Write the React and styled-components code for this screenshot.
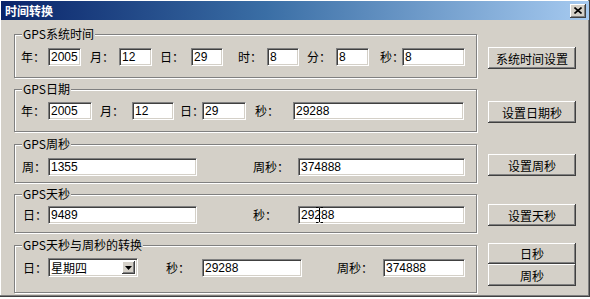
import React from 'react';
import styled, { createGlobalStyle } from 'styled-components';

const GlobalStyle = createGlobalStyle`
  html, body {
    margin: 0;
    padding: 0;
    background: #ffffff;
  }
  body {
    font-family: "Noto Sans CJK SC", "Liberation Sans", sans-serif;
    font-size: 12px;
  }
`;

// x where group content starts (border at 14, 1px thick)
const GROUP_X = 15;

const groups = [
  {
    title: 'GPS系统时间', h: 44, pt: 13, mt: 0,
    buttons: [{ text: '系统时间设置', mt: 13 }],
    fields: [
      { label: '年：', lx: 21, ix: 48, iw: 33, value: '2005' },
      { label: '月：', lx: 90, ix: 119, iw: 33, value: '12' },
      { label: '日：', lx: 160, ix: 191, iw: 32, value: '29' },
      { label: '时：', lx: 238, ix: 267, iw: 32, value: '8' },
      { label: '分：', lx: 307, ix: 336, iw: 33, value: '8' },
      { label: '秒：', lx: 380, ix: 402, iw: 63, value: '8' },
    ],
  },
  {
    title: 'GPS日期', h: 43, pt: 12, mt: 11,
    buttons: [{ text: '设置日期秒', mt: 12 }],
    fields: [
      { label: '年：', lx: 21, ix: 48, iw: 44, value: '2005' },
      { label: '月：', lx: 100, ix: 132, iw: 42, value: '12' },
      { label: '日：', lx: 180, ix: 202, iw: 44, value: '29' },
      { label: '秒：', lx: 255, ix: 293, iw: 171, value: '29288' },
    ],
  },
  {
    title: 'GPS周秒', h: 39, pt: 13, mt: 12,
    buttons: [{ text: '设置周秒', mt: 10 }],
    fields: [
      { label: '周：', lx: 22, ix: 48, iw: 149, value: '1355' },
      { label: '周秒：', lx: 253, ix: 298, iw: 167, value: '374888' },
    ],
  },
  {
    title: 'GPS天秒', h: 39, pt: 11, mt: 11,
    buttons: [{ text: '设置天秒', mt: 10 }],
    fields: [
      { label: '日：', lx: 23, ix: 48, iw: 149, value: '9489' },
      { label: '秒：', lx: 253, ix: 298, iw: 167, value: '29288', cursor: 17 },
    ],
  },
  {
    title: 'GPS天秒与周秒的转换', h: 48, pt: 13, mt: 12,
    buttons: [{ text: '日秒', mt: -2, h: 21 }, { text: '周秒', mt: 0 }],
    fields: [
      { label: '日：', lx: 23, ix: 48, iw: 90, value: '星期四', combo: true },
      { label: '秒：', lx: 166, ix: 202, iw: 100, value: '29288' },
      { label: '周秒：', lx: 337, ix: 383, iw: 82, value: '374888' },
    ],
  },
];

function Fields({ fields }) {
  let end = GROUP_X;
  return fields.map((f, i) => {
    const ml = f.lx - end;
    end = f.ix + f.iw;
    return (
      <React.Fragment key={i}>
        <Label $ml={ml} $w={f.ix - f.lx}>{f.label}</Label>
        {f.combo ? (
          <Combo $w={f.iw}>
            <span>{f.value}</span>
            <ComboArrow>
              <svg width="7" height="4" viewBox="0 0 7 4">
                <path d="M0 0h7L3.5 4z" fill="#000" />
              </svg>
            </ComboArrow>
          </Combo>
        ) : (
          <TextBox $w={f.iw}>
            {f.value}
            {f.cursor && (
              <IBeam style={{ left: f.cursor }}>
                <svg width="7" height="16" viewBox="0 0 7 16">
                  <path d="M0 0.5h2.5M4.5 0.5h2.5M3.5 1v14M0 15.5h2.5M4.5 15.5h2.5" stroke="#000" fill="none" />
                </svg>
              </IBeam>
            )}
          </TextBox>
        )}
      </React.Fragment>
    );
  });
}

export default function App() {
  return (
    <>
      <GlobalStyle />
      <Window>
        <TitleBar>
          <Title>时间转换</Title>
          <CloseButton>
            <svg width="8" height="7" viewBox="0 0 8 7">
              <path d="M0.5 0.5l7 6M7.5 0.5l-7 6" stroke="#000" strokeWidth="1.6" />
            </svg>
          </CloseButton>
        </TitleBar>
        <Body>
          {groups.map((g) => (
            <Row key={g.title} $mt={g.mt}>
              <Group $h={g.h} $pt={g.pt}>
                <Legend>{g.title}</Legend>
                <Fields fields={g.fields} />
              </Group>
              <ButtonCol>
                {g.buttons.map((b) => (
                  <Button key={b.text} $mt={b.mt} $h={b.h || 22}>{b.text}</Button>
                ))}
              </ButtonCol>
            </Row>
          ))}
        </Body>
      </Window>
    </>
  );
}

const Window = styled.div`
  width: 590px;
  height: 297px;
  box-sizing: border-box;
  padding: 1px;
  background: #d4d0c8;
  box-shadow: inset -1px -1px 0 #404040, inset -2px -2px 0 #808080, inset 1px 1px 0 #ffffff;
  display: flex;
  flex-direction: column;
`;

const TitleBar = styled.div`
  height: 19px;
  display: flex;
  align-items: center;
  justify-content: space-between;
  padding: 0 3px 0 4px;
  background: linear-gradient(to right, #0a246a, #3a6ea5 45%, #a6caf0);
`;

const Title = styled.span`
  color: #ffffff;
  font-weight: bold;
  font-size: 12px;
  line-height: 14px;
`;

const CloseButton = styled.div`
  width: 16px;
  height: 14px;
  box-sizing: border-box;
  background: #d4d0c8;
  display: flex;
  align-items: center;
  justify-content: center;
  box-shadow: inset -1px -1px 0 #404040, inset 1px 1px 0 #ffffff, inset -2px -2px 0 #808080;
`;

const Body = styled.div`
  padding: 14px 0 0 13px;
  display: flex;
  flex-direction: column;
`;

const Row = styled.div`
  display: flex;
  align-items: flex-start;
  margin-top: ${(p) => p.$mt}px;
`;

const Group = styled.div`
  position: relative;
  width: 463px;
  height: ${(p) => p.$h}px;
  box-sizing: border-box;
  padding-top: ${(p) => p.$pt}px;
  border: 1px solid #808080;
  box-shadow: inset 1px 1px 0 #ffffff, 1px 1px 0 #ffffff;
  display: flex;
  align-items: flex-start;
`;

const Legend = styled.span`
  position: absolute;
  left: 7px;
  top: -8px;
  padding: 0 1px;
  background: #d4d0c8;
  color: #000;
  font-size: 12px;
  line-height: 14px;
  white-space: nowrap;
`;

const Label = styled.span`
  flex: none;
  margin-left: ${(p) => p.$ml}px;
  width: ${(p) => p.$w}px;
  height: 18px;
  line-height: 18px;
  color: #000;
  font-size: 12px;
  white-space: nowrap;
`;

const TextBox = styled.div`
  position: relative;
  flex: none;
  width: ${(p) => p.$w}px;
  height: 18px;
  box-sizing: border-box;
  padding-left: 2px;
  background: #ffffff;
  border: 1px solid;
  border-color: #808080 #ffffff #ffffff #808080;
  box-shadow: inset 1px 1px 0 #404040, inset -1px -1px 0 #d4d0c8;
  font-family: "Liberation Sans", Arial, sans-serif;
  font-size: 12px;
  line-height: 16px;
  color: #000;
`;

const IBeam = styled.span`
  position: absolute;
  top: 0;
  display: block;
  line-height: 0;
`;

const Combo = styled.div`
  flex: none;
  width: ${(p) => p.$w}px;
  height: 19px;
  margin-top: -1px;
  box-sizing: border-box;
  background: #ffffff;
  border: 1px solid;
  border-color: #808080 #ffffff #ffffff #808080;
  box-shadow: inset 1px 1px 0 #404040, inset -1px -1px 0 #d4d0c8;
  display: flex;
  align-items: center;
  justify-content: space-between;
  padding: 2px;
  font-size: 12px;
  color: #000;
  span {
    line-height: 14px;
  }
`;

const ComboArrow = styled.div`
  width: 13px;
  height: 13px;
  box-sizing: border-box;
  background: #d4d0c8;
  display: flex;
  align-items: center;
  justify-content: center;
  box-shadow: inset -1px -1px 0 #404040, inset 1px 1px 0 #ffffff, inset -2px -2px 0 #808080;
`;

const ButtonCol = styled.div`
  display: flex;
  flex-direction: column;
  margin-left: 11px;
`;

const Button = styled.div`
  width: 88px;
  height: ${(p) => p.$h}px;
  margin-top: ${(p) => p.$mt}px;
  box-sizing: border-box;
  background: #d4d0c8;
  display: flex;
  align-items: center;
  justify-content: center;
  font-size: 12px;
  color: #000;
  box-shadow: inset -1px -1px 0 #404040, inset 1px 1px 0 #ffffff, inset -2px -2px 0 #808080;
`;
